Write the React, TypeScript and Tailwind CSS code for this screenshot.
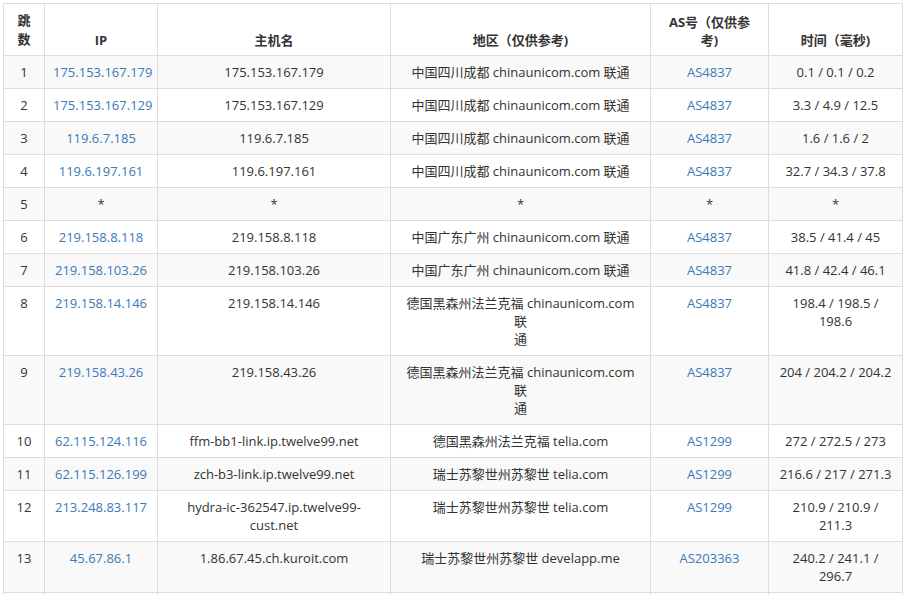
const rows = [
  ["1","175.153.167.179","175.153.167.179","中国四川成都 chinaunicom.com 联通","AS4837","0.1 / 0.1 / 0.2"],
  ["2","175.153.167.129","175.153.167.129","中国四川成都 chinaunicom.com 联通","AS4837","3.3 / 4.9 / 12.5"],
  ["3","119.6.7.185","119.6.7.185","中国四川成都 chinaunicom.com 联通","AS4837","1.6 / 1.6 / 2"],
  ["4","119.6.197.161","119.6.197.161","中国四川成都 chinaunicom.com 联通","AS4837","32.7 / 34.3 / 37.8"],
  ["5","*","*","*","*","*"],
  ["6","219.158.8.118","219.158.8.118","中国广东广州 chinaunicom.com 联通","AS4837","38.5 / 41.4 / 45"],
  ["7","219.158.103.26","219.158.103.26","中国广东广州 chinaunicom.com 联通","AS4837","41.8 / 42.4 / 46.1"],
  ["8","219.158.14.146","219.158.14.146","德国黑森州法兰克福 chinaunicom.com 联\u200b通","AS4837","198.4 / 198.5 / 198.6"],
  ["9","219.158.43.26","219.158.43.26","德国黑森州法兰克福 chinaunicom.com 联\u200b通","AS4837","204 / 204.2 / 204.2"],
  ["10","62.115.124.116","ffm-bb1-link.ip.twelve99.net","德国黑森州法兰克福 telia.com","AS1299","272 / 272.5 / 273"],
  ["11","62.115.126.199","zch-b3-link.ip.twelve99.net","瑞士苏黎世州苏黎世 telia.com","AS1299","216.6 / 217 / 271.3"],
  ["12","213.248.83.117","hydra-ic-362547.ip.twelve99-cust.net","瑞士苏黎世州苏黎世 telia.com","AS1299","210.9 / 210.9 / 211.3"],
  ["13","45.67.86.1","1.86.67.45.ch.kuroit.com","瑞士苏黎世州苏黎世 develapp.me","AS203363","240.2 / 241.1 / 296.7"],
  ["14","45.67.86.2","2.86.67.45.ch.kuroit.com","瑞士苏黎世州苏黎世 develapp.me","AS203363","209.7 / 209.9 / 210"],
];
const widths = ["w-[41px]","w-[113px]","w-[233px]","w-[260px]","w-[118px]","w-[134px]"];
export default function App() {
  return (
    <div className="bg-white w-[905px] h-[595px] pl-[3px] pt-[3px]" style={{fontFamily:'"Open Sans","Noto Sans CJK SC",sans-serif'}}>
      <table className="border-collapse text-[13px] leading-[18px] text-[#333] w-[899px] table-fixed">
        <thead>
          <tr>
            {["跳数","IP","主机名","地区（仅供参考)","AS号（仅供参考)","时间（毫秒)"].map((h,i)=>(
              <th key={i} className={`${widths[i]} border border-[#ddd] px-[8px] py-[6px] align-bottom font-bold text-center h-[52px]`}>
                {i===0 ? <span className="block w-[14px] mx-auto leading-[19px]">跳数</span>
                  : i===4 ? <span>AS号（仅供参<br/>考)</span> : h}
              </th>
            ))}
          </tr>
        </thead>
        <tbody>
          {rows.map((r,ri)=>(
            <tr key={ri} className={ri%2===0?"bg-[#f9f9f9]":"bg-white"}>
              {r.map((c,ci)=>(
                <td key={ci} className={`border border-[#ddd] px-[8px] py-[7px] align-top text-center ${(ci===1||ci===4)&&c!=="*"?"text-[#3a7ab6]":""}`}>
                  {ci===3 && c.includes("\u200b") ? <>{c.split("\u200b")[0]}<br/>{c.split("\u200b")[1]}</> : c}
                </td>
              ))}
            </tr>
          ))}
        </tbody>
      </table>
    </div>
  );
}
